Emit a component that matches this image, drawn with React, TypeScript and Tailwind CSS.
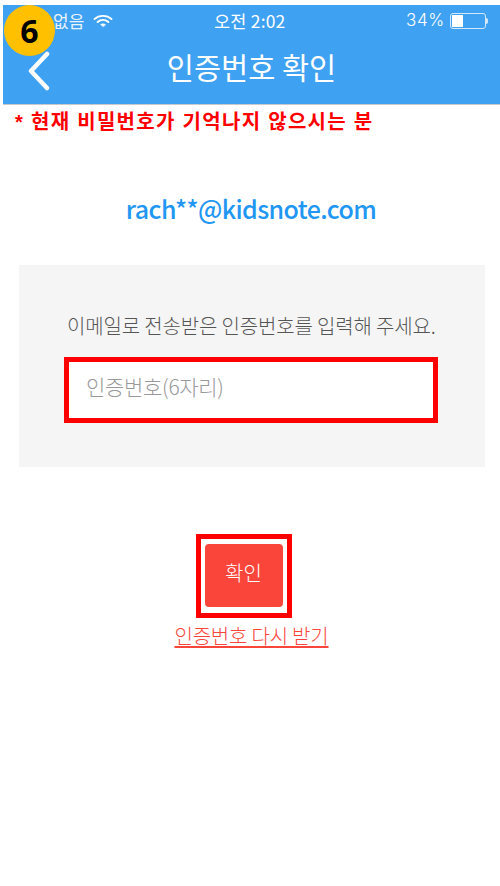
const KO = 'font-["Noto_Sans_CJK_KR","Noto_Sans",sans-serif]';

function Wifi() {
  return (
    <svg width="20" height="14" viewBox="0 0 20 14" fill="none" stroke="#fff" strokeLinecap="round">
      <path d="M1.5 5 C6 0.8 14 0.8 18.5 5" strokeWidth="1.9" />
      <path d="M4.6 8 C7.8 5.2 12.2 5.2 15.4 8" strokeWidth="1.9" />
      <path d="M10 12.6 L7.6 10.6 C9 9.6 11 9.6 12.4 10.6 Z" fill="#fff" strokeWidth="0.6" />
    </svg>
  );
}

function Battery() {
  return (
    <div className="flex items-center">
      <div className="h-[16px] w-[36px] rounded-[3px] border border-[#d5e8fb] p-[1px]">
        <div className="h-full w-[11px] bg-white" />
      </div>
      <div className="h-[6px] w-[2px] rounded-r-sm bg-[#d5e8fb]" />
    </div>
  );
}

export default function App() {
  return (
    <div className={`relative h-[886px] w-[500px] overflow-hidden bg-white pt-[5px] ${KO}`}>
      {/* Step badge */}
      <div className="absolute left-[4px] top-[5px] flex h-[51px] w-[51px] items-center justify-center rounded-full bg-[#ffc000] font-['Open_Sans',sans-serif] text-[32px] font-bold text-black">
        6
      </div>

      {/* Header */}
      <div className="ml-[3px] h-[100px] border-b border-[#c9c9c9] bg-[#3fa1f1] text-white">
        <div className="relative flex h-[32px] items-center justify-between pl-[50px] pr-[12px] text-[17px]">
          <div className="flex items-center gap-[9px]">
            <span className="text-[#e8f3fd]">없음</span>
            <Wifi />
          </div>
          <span className="absolute left-[211px] top-[4px] text-[17.5px] leading-[24px] tracking-[0.2px]">오전 2:02</span>
          <div className="flex items-center gap-[5px]">
            <span className="font-['Inter',sans-serif] text-[17px] font-light tracking-[0.7px]">34%</span>
            <Battery />
          </div>
        </div>
        <div className="relative flex h-[67px] items-start justify-center pt-[9px]">
          <svg className="absolute left-[24px] top-[14px]" width="24" height="40" viewBox="0 0 24 40" fill="none" stroke="#fff" strokeWidth="4.5" strokeLinecap="round" strokeLinejoin="round">
            <path d="M20 3 L4 20 L20 37" />
          </svg>
          <h1 className="text-[29.5px] font-normal leading-[40px]">인증번호 확인</h1>
        </div>
      </div>

      <p className="mt-[4px] pl-[15px] font-['Liberation_Sans','Noto_Sans_CJK_KR',sans-serif] text-[20px] font-bold leading-[26px] tracking-[1.3px] text-[#ff0000]">
        * 현재 비밀번호가 기억나지 않으시는 분
      </p>

      <p className="mt-[55px] pl-[2px] text-center text-[25px] font-medium leading-[36px] tracking-[-0.6px] text-[#2196f3]">
        rach**@kidsnote.com
      </p>

      {/* Code panel */}
      <div className="mx-[19px] mt-[39px] h-[202px] w-[466px] bg-[#f5f5f5] px-[45px] pt-[47px]">
        <p className="ml-[3px] whitespace-nowrap text-[20px] font-light leading-[28px] tracking-[-0.15px] text-[#555]">
          이메일로 전송받은 인증번호를 입력해 주세요.
        </p>
        <div className="mt-[17px] flex h-[66px] w-[374px] items-center border-[5px] border-[#ff0000] bg-white pb-[6px] pl-[17px] text-[21px] font-light tracking-[-0.3px] text-[#999]">
          인증번호(6자리)
        </div>
      </div>

      {/* Confirm */}
      <div className="mt-[67px] flex flex-col items-center">
        <div className="ml-[-13px] border-[5px] border-[#ff0000] bg-white px-[4px] pb-[6px] pt-[5px]">
          <button className="block h-[63px] w-[78px] rounded-[4px] bg-[#f9453a] pb-[6px] text-[20px] font-light text-white">확인</button>
        </div>
        <a className="mt-[3px] ml-[3px] text-[20px] font-light leading-[30px] tracking-[-0.2px] text-[#f9453a] underline underline-offset-[2px]">
          인증번호 다시 받기
        </a>
      </div>
    </div>
  );
}
